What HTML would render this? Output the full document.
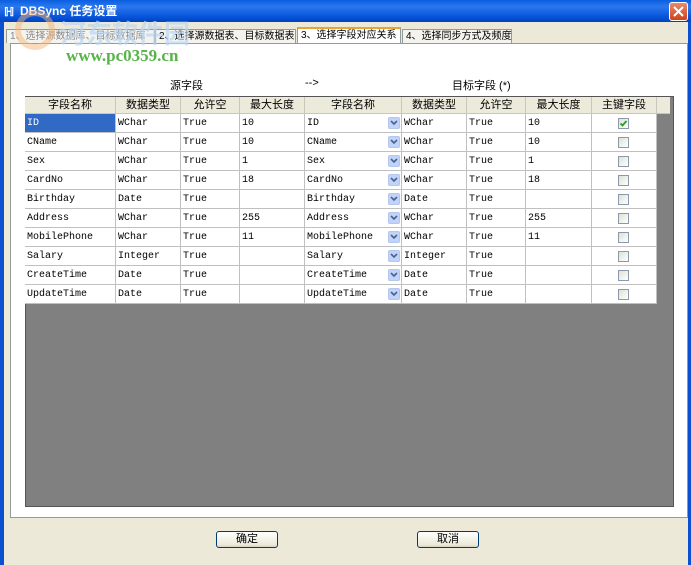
<!DOCTYPE html>
<html><head><meta charset="utf-8"><style>
*{margin:0;padding:0;box-sizing:border-box}
body{width:691px;height:565px;overflow:hidden;background:#ece9d8;position:relative;font-family:"Liberation Sans","Noto Sans CJK SC",sans-serif;font-size:11px;color:#000}
.a{position:absolute}
.title{left:0;top:0;width:691px;height:22px;background:linear-gradient(#0a5ee0,#2a78ee 30%,#0551d8 80%,#0342b8);color:#fff;font-weight:bold;font-size:12px;line-height:22px;padding-left:20px}
.lb{left:0;top:22px;width:4px;height:543px;background:#0a50d0}
.rb{right:0;top:22px;width:3px;height:543px;background:#0a50d0}
.close{left:669px;top:2px;width:19px;height:19px;background:linear-gradient(#e88a6c,#d0441c);border:1px solid #fff;border-radius:3px}
.tab{top:29px;height:14px;background:#f4f3ee;border:1px solid #919b9c;border-bottom:none;font-size:10px;line-height:13px;padding-left:3px;white-space:nowrap}
.panel{left:10px;top:43px;width:678px;height:475px;background:#fff;border:1px solid #919b9c}
.grid{left:25px;top:96px;width:649px;height:411px;background:#808080;border:1px solid #555}
.hd{top:97px;height:17px;background:#ebeadb;border-bottom:1px solid #c9c7ba;font-size:11px;text-align:center;line-height:16px}
.c{height:19px;background:#fff;border-right:1px solid #c0c0c0;border-bottom:1px solid #c0c0c0;font-family:"Liberation Mono",monospace;font-size:10px;line-height:20px;padding-left:2px;white-space:nowrap;overflow:hidden}
.dd{width:12px;height:12px;background:#c1d3fb;border:1px solid #b3c6ee;border-radius:2px}
.cb{width:11px;height:11px;border:1px solid #8a9aa8;background:linear-gradient(135deg,#e0e0d8,#fff)}
.btn{top:531px;height:17px;width:62px;border:1px solid #003c74;border-radius:3px;background:linear-gradient(#fff,#ece9d8 85%,#d6d0c5);text-align:center;line-height:15px;font-size:11px}
.lbl{top:77px;font-size:11px}
</style></head><body>
<div class="a title">DBSync 任务设置</div>
<div class="a" style="left:4px;top:5px;color:#fff;font-weight:bold;font-size:12px">ℍ</div>
<div class="a close"><svg width="17" height="17" viewBox="0 0 17 17"><path d="M4 4L13 13M13 4L4 13" stroke="#fff" stroke-width="2"/></svg></div>
<div class="a lb"></div><div class="a rb"></div>
<div class="a tab" style="left:6px;width:149px;color:#888">1、选择源数据库、目标数据库</div>
<div class="a tab" style="left:155px;width:141px">2、选择源数据表、目标数据表</div>
<div class="a tab" style="left:297px;width:104px;top:27px;height:16px;background:#fff;border-top:2px solid #e8a43a">3、选择字段对应关系</div>
<div class="a tab" style="left:402px;width:110px">4、选择同步方式及频度</div>
<div class="a panel"></div>
<div class="a" style="left:15px;top:10px;width:40px;height:40px;border:6px solid #f5b57a;border-radius:50%;opacity:.5"></div>
<div class="a" style="left:60px;top:14px;font-size:26px;font-weight:bold;color:#bcd6f3;opacity:.7">河东软件园</div>
<div class="a" style="left:66px;top:46px;font-family:'Liberation Serif',serif;font-weight:bold;font-size:17px;color:#58b348">www.pc0359.cn</div>
<div class="a lbl" style="left:170px">源字段</div>
<div class="a lbl" style="left:305px">--&gt;</div>
<div class="a lbl" style="left:452px">目标字段 (*)</div>
<div class="a grid"></div>
<div id="g"></div>
<div class="a btn" style="left:216px">确定</div>
<div class="a btn" style="left:417px">取消</div>
<script>
var e=[25,116,181,240,305,402,467,526,592,657];
var h=["字段名称","数据类型","允许空","最大长度","字段名称","数据类型","允许空","最大长度","主键字段"];
var r=[["ID","WChar","True","10"],["CName","WChar","True","10"],["Sex","WChar","True","1"],["CardNo","WChar","True","18"],["Birthday","Date","True",""],["Address","WChar","True","255"],["MobilePhone","WChar","True","11"],["Salary","Integer","True",""],["CreateTime","Date","True",""],["UpdateTime","Date","True",""]];
var s="";
for(var i=0;i<9;i++)s+='<div class="a hd" style="left:'+e[i]+'px;width:'+(e[i+1]-e[i])+'px;border-right:1px solid #c9c7ba">'+h[i]+'</div>';
s+='<div class="a hd" style="left:657px;width:13px"></div>';
for(var j=0;j<10;j++){var y=114+j*19;var row=r[j].concat(r[j]).concat([""]);
for(var i=0;i<9;i++){var st='left:'+e[i]+'px;top:'+y+'px;width:'+(e[i+1]-e[i])+'px;';
if(i==0&&j==0)st+='background:#316ac5;color:#fff;';
s+='<div class="a c" style="'+st+'">'+row[i]+'</div>';}
s+='<div class="a dd" style="left:388px;top:'+(y+3)+'px"><svg width="10" height="10" viewBox="0 0 10 10"><path d="M2 3L5 6L8 3" stroke="#4d6185" stroke-width="1.6" fill="none"/></svg></div>';
s+='<div class="a cb" style="left:618px;top:'+(y+4)+'px">'+(j==0?'<svg width="9" height="9" viewBox="0 0 9 9"><path d="M1.5 4.5L3.5 6.5L7.5 2" stroke="#21a121" stroke-width="1.8" fill="none"/></svg>':'')+'</div>';}
document.getElementById("g").innerHTML=s;
</script>
</body></html>
